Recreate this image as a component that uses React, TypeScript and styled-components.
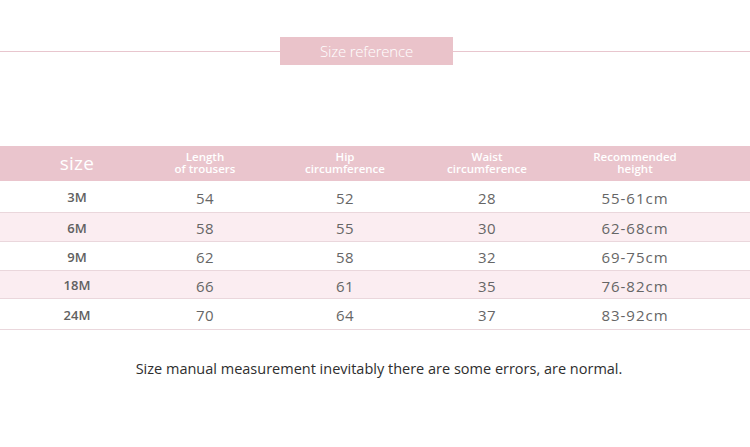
import styled, { createGlobalStyle } from "styled-components";

const GlobalStyle = createGlobalStyle`
  html, body {
    margin: 0;
    padding: 0;
    background: #ffffff;
  }
  body {
    font-family: "Open Sans", "Noto Sans", sans-serif;
  }
`;

const ROWS = [
  { size: "3M", length: "54", hip: "52", waist: "28", height: "55-61cm" },
  { size: "6M", length: "58", hip: "55", waist: "30", height: "62-68cm" },
  { size: "9M", length: "62", hip: "58", waist: "32", height: "69-75cm" },
  { size: "18M", length: "66", hip: "61", waist: "35", height: "76-82cm" },
  { size: "24M", length: "70", hip: "64", waist: "37", height: "83-92cm" },
];

const HEIGHTS = [32, 29, 29, 28, 31];

const App = () => {
  return (
    <Page>
      <GlobalStyle />
      <TitleBar>
        <Line $w={280} />
        <TitleBox>Size reference</TitleBox>
        <Line />
      </TitleBar>
      <Table>
        <HeadRow>
          <SizeHead>size</SizeHead>
          <HeadCell>
            Length
            <br />
            of trousers
          </HeadCell>
          <HeadCell>
            Hip
            <br />
            circumference
          </HeadCell>
          <HeadCell>
            Waist
            <br />
            circumference
          </HeadCell>
          <HeadCell>
            Recommended
            <br />
            height
          </HeadCell>
        </HeadRow>
        {ROWS.map((row, i) => (
          <Row key={row.size} $striped={i % 2 === 1} $h={HEIGHTS[i]}>
            <SizeCell>{row.size}</SizeCell>
            <Cell>{row.length}</Cell>
            <Cell>{row.hip}</Cell>
            <Cell>{row.waist}</Cell>
            <Cell $wide>{row.height}</Cell>
          </Row>
        ))}
      </Table>
      <Note>Size manual measurement inevitably there are some errors, are normal.</Note>
    </Page>
  );
};

const Page = styled.div`
  width: 750px;
  height: 447px;
  overflow: hidden;
  padding-top: 37px;
  box-sizing: border-box;
`;

const TitleBar = styled.div`
  display: flex;
  align-items: center;
  height: 28px;
`;

const Line = styled.div<{ $w?: number }>`
  flex: ${(p) => (p.$w ? `0 0 ${p.$w}px` : "1")};
  height: 1px;
  background: #e8c6ce;
`;

const TitleBox = styled.div`
  width: 173px;
  height: 28px;
  background: #eac3ca;
  color: #ffffff;
  font-size: 15px;
  font-weight: 300;
  display: flex;
  align-items: center;
  justify-content: center;
  letter-spacing: -0.2px;
`;

const Table = styled.div`
  margin-top: 81px;
`;

const cols = "154px 102px 178px 106px 190px 20px";

const HeadRow = styled.div`
  display: grid;
  grid-template-columns: ${cols};
  height: 35px;
  align-items: center;
  background: #eac5cd;
  color: #ffffff;
`;

const SizeHead = styled.div`
  text-align: center;
  font-size: 19px;
  font-weight: 500;
  letter-spacing: 0.3px;
  padding-bottom: 2px;
`;

const HeadCell = styled.div`
  text-align: center;
  font-size: 11.5px;
  font-weight: 600;
  line-height: 12px;
  padding-bottom: 1px;
`;

const Row = styled.div<{ $striped: boolean; $h: number }>`
  display: grid;
  grid-template-columns: ${cols};
  align-items: center;
  height: ${(p) => p.$h}px;
  box-sizing: border-box;
  background: ${(p) => (p.$striped ? "#fbedf1" : "#ffffff")};
  border-bottom: 1px solid #ead7dc;
`;

const SizeCell = styled.div`
  text-align: center;
  font-size: 13px;
  font-weight: 600;
  color: #616161;
  padding-top: 1px;
`;

const Cell = styled.div<{ $wide?: boolean }>`
  text-align: center;
  font-size: 15px;
  color: #666666;
  letter-spacing: ${(p) => (p.$wide ? "1px" : "0.5px")};
  padding-top: 2px;
`;

const Note = styled.div`
  margin-top: 29px;
  text-align: center;
  font-size: 14.5px;
  font-weight: 500;
  color: #2e2e2e;
  padding-left: 8px;
`;

export default App;
